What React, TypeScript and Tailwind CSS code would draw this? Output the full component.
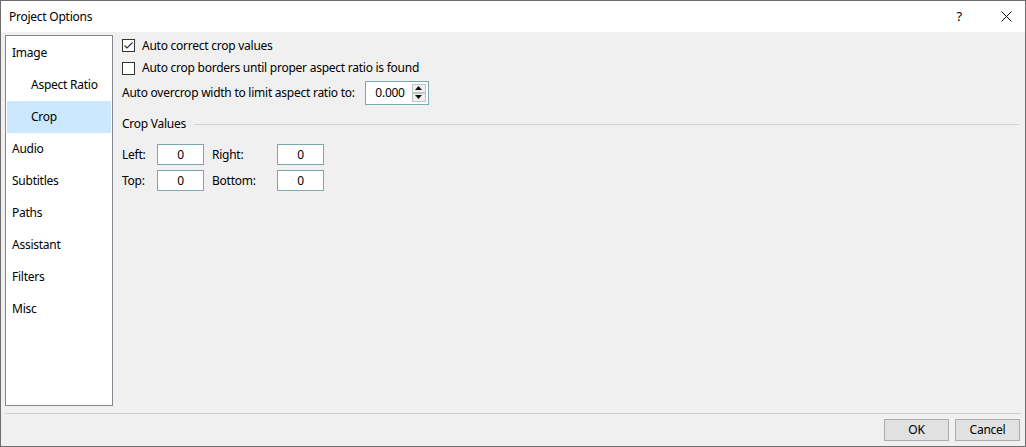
import type { ReactNode } from "react";

const font = { fontFamily: '"Noto Sans", "Open Sans", sans-serif' };

const navItems = [
  { label: "Image", indent: false },
  { label: "Aspect Ratio", indent: true },
  { label: "Crop", indent: true, selected: true },
  { label: "Audio", indent: false },
  { label: "Subtitles", indent: false },
  { label: "Paths", indent: false },
  { label: "Assistant", indent: false },
  { label: "Filters", indent: false },
  { label: "Misc", indent: false },
];

function Checkbox({ checked, h, children }: { checked?: boolean; h: string; children: ReactNode }) {
  return (
    <div className={`flex items-center ${h}`}>
      <span className="flex h-[13px] w-[13px] items-center justify-center border border-[#333] bg-white">
        {checked && (
          <svg width="11" height="11" viewBox="0 0 11 11">
            <path d="M1.5 5.5 L4 8 L9.5 2.5" fill="none" stroke="#333" strokeWidth="1.2" />
          </svg>
        )}
      </span>
      <span className="ml-[7px]">{children}</span>
    </div>
  );
}

function NumBox({ value }: { value: string }) {
  return (
    <div className="flex h-[21px] w-[47px] items-center justify-center border border-[#7aa9ab] bg-white">
      {value}
    </div>
  );
}

function Arrow({ up }: { up?: boolean }) {
  return (
    <div className="flex h-[9px] w-[14px] items-center justify-center border border-[#c4c4c4] bg-[#f0f0f0]">
      <svg width="7" height="4" viewBox="0 0 7 4">
        <path d={up ? "M0 4 L3.5 0 L7 4 Z" : "M0 0 L3.5 4 L7 0 Z"} fill="#111" />
      </svg>
    </div>
  );
}

export default function App() {
  return (
    <div
      style={font}
      className="flex h-[447px] w-[1026px] flex-col border border-[#6d6d6d] bg-[#f0f0f0] text-[12px] tracking-[-0.25px] text-black"
    >
      <div className="flex h-[31px] shrink-0 items-center bg-white pl-[8px]">
        <span>Project Options</span>
        <span className="ml-auto mr-[39px] text-[13px]">?</span>
        <svg className="mr-[13px]" width="11" height="11" viewBox="0 0 11 11">
          <path d="M0.5 0.5 L10.5 10.5 M10.5 0.5 L0.5 10.5" stroke="#111" strokeWidth="1" />
        </svg>
      </div>

      <div className="flex flex-1 pl-[4px] pt-[3px]">
        <div className="h-[371px] w-[108px] shrink-0 border border-[#828790] bg-white p-px">
          {navItems.map((it) => (
            <div
              key={it.label}
              className={`flex h-[32px] items-center ${it.indent ? "pl-[24px]" : "pl-[5px]"} ${
                it.selected ? "bg-[#cce8ff]" : ""
              }`}
            >
              {it.label}
            </div>
          ))}
        </div>

        <div className="ml-[9px] flex flex-1 flex-col pr-[6px]">
          <Checkbox checked h="h-[21px]">
            Auto correct crop values
          </Checkbox>
          <Checkbox h="h-[24px]">Auto crop borders until proper aspect ratio is found</Checkbox>
          <div className="flex h-[25px] items-center">
            <span>Auto overcrop width to limit aspect ratio to:</span>
            <div className="ml-[10px] flex h-[24px] w-[64px] items-center border border-[#7aa9ab] bg-white">
              <span className="flex-1 pr-[7px] text-right">0.000</span>
              <div className="mr-[2px] flex flex-col">
                <Arrow up />
                <Arrow />
              </div>
            </div>
          </div>
          <div className="mt-[9px] flex h-[20px] items-center">
            <span>Crop Values</span>
            <span className="ml-[8px] h-px flex-1 bg-[#d5d5d5]" />
          </div>
          <div className="mt-[10px] grid grid-cols-[35px_47px_8px_65px_47px] items-center gap-y-[5px]">
            <span>Left:</span>
            <NumBox value="0" />
            <span />
            <span>Right:</span>
            <NumBox value="0" />
            <span>Top:</span>
            <NumBox value="0" />
            <span />
            <span>Bottom:</span>
            <NumBox value="0" />
          </div>
        </div>
      </div>

      <div className="mx-[4px] h-px bg-[#cfcfcf]" />
      <div className="flex h-[32px] items-start justify-end gap-[6px] pr-[5px] pt-[5px]">
        <button className="h-[22px] w-[65px] border border-[#adadad] bg-[#e1e1e1]">OK</button>
        <button className="h-[22px] w-[65px] border border-[#adadad] bg-[#e1e1e1]">Cancel</button>
      </div>
    </div>
  );
}
